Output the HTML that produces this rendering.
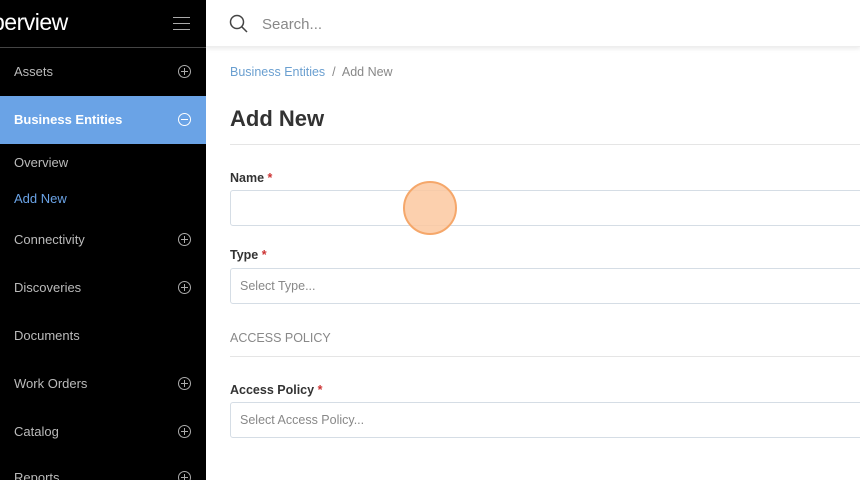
<!DOCTYPE html>
<html><head><meta charset="utf-8"><style>
*{margin:0;padding:0;box-sizing:border-box}
body{width:860px;height:480px;overflow:hidden;font-family:"Liberation Sans","DejaVu Sans",sans-serif;background:#fff;position:relative}
.sb{position:absolute;left:0;top:0;width:206px;height:480px;background:#000;color:#bbb;font-size:13px;overflow:hidden}
.logo{position:absolute;left:-8px;top:9px;color:#fff;font-size:23px;font-weight:normal;letter-spacing:-0.5px}
.hb{position:absolute;left:173px;top:17px;width:17px}
.hb i{display:block;height:1px;background:#aaa;margin-bottom:5px}
.sep{position:absolute;left:0;top:47px;width:206px;height:1px;background:#444}
.it{position:absolute;left:0;width:206px;height:48px;line-height:48px;padding-left:14px}
.pl{position:absolute;right:15px;top:17px;width:13px;height:13px;border:1px solid #aaa;border-radius:50%}
.pl:before{content:"";position:absolute;left:2px;top:5px;width:7px;height:1px;background:#aaa}
.pl.p:after{content:"";position:absolute;left:5px;top:2px;width:1px;height:7px;background:#aaa}
.act{background:#6aa3e6;color:#fff;font-weight:bold}
.act .pl{border-color:#fff}.act .pl:before{background:#fff}
.sub{position:absolute;left:14px;font-size:13px}
.top{position:absolute;left:206px;top:0;right:0;height:47px;box-shadow:0 2px 4px rgba(0,0,0,.08);border-bottom:1px solid #eee}
.srch{position:absolute;left:262px;top:16px;font-size:15px;color:#888}
.bc{position:absolute;left:230px;top:65px;font-size:12.5px;color:#888}
h1{position:absolute;left:230px;top:106px;font-size:22px;font-weight:bold;color:#333}
.hr{position:absolute;left:206px;right:0;height:1px;background:#e5e5e5}
.lb{position:absolute;left:230px;font-size:12.5px;font-weight:bold;color:#333}
.lb b{color:#c33}
.in{position:absolute;left:230px;right:-5px;height:36px;border:1px solid #d5dde5;border-radius:3px;font-size:12.5px;color:#888;padding:10px 9px}
.dot{position:absolute;left:403px;top:181px;width:54px;height:54px;border-radius:50%;background:rgba(252,200,160,.85);border:2px solid #f5a76a}
</style></head><body>
<div class="sb">
<div class="logo">perview</div>
<div class="hb"><i></i><i></i><i></i></div>
<div class="sep"></div>
<div class="it" style="top:48px">Assets<span class="pl p"></span></div>
<div class="it act" style="top:96px">Business Entities<span class="pl"></span></div>
<div class="sub" style="top:155px">Overview</div>
<div class="sub" style="top:191px;color:#6aa3e6">Add New</div>
<div class="it" style="top:216px">Connectivity<span class="pl p"></span></div>
<div class="it" style="top:264px">Discoveries<span class="pl p"></span></div>
<div class="it" style="top:312px">Documents</div>
<div class="it" style="top:360px">Work Orders<span class="pl p"></span></div>
<div class="it" style="top:408px">Catalog<span class="pl p"></span></div>
<div class="it" style="top:454px">Reports<span class="pl p"></span></div>
</div>
<div class="top"></div>
<svg style="position:absolute;left:229px;top:14px" width="20" height="20" viewBox="0 0 20 20"><circle cx="8" cy="8" r="6.5" fill="none" stroke="#444" stroke-width="1.5"/><line x1="12.8" y1="12.8" x2="18" y2="18" stroke="#444" stroke-width="1.5"/></svg>
<div class="srch">Search...</div>
<div class="bc"><span style="color:#6a9fd0">Business Entities</span> &nbsp;/&nbsp; Add New</div>
<h1>Add New</h1>
<div class="hr" style="top:144px;left:230px"></div>
<div class="lb" style="top:171px">Name <b>*</b></div>
<div class="in" style="top:190px"></div>
<div class="lb" style="top:248px">Type <b>*</b></div>
<div class="in" style="top:268px">Select Type...</div>
<div style="position:absolute;left:230px;top:331px;font-size:12.5px;color:#888">ACCESS POLICY</div>
<div class="hr" style="top:356px;left:230px"></div>
<div class="lb" style="top:383px">Access Policy <b>*</b></div>
<div class="in" style="top:402px">Select Access Policy...</div>
<div class="dot"></div>
</body></html>
